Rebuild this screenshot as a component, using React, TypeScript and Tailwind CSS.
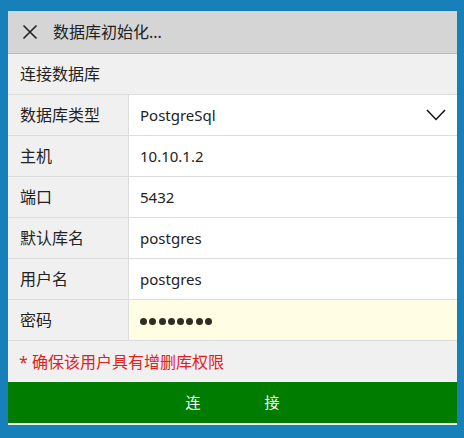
import React from "react";

const font = { fontFamily: '"Noto Sans", "Noto Sans CJK SC", sans-serif' };

function Row({ label, children, bg = "bg-white" }: { label: string; children: React.ReactNode; bg?: string }) {
  return (
    <div className="flex h-[41px] border-b border-[#dcdcdc]">
      <div className="w-[121px] shrink-0 flex items-center pl-3 bg-[#f0f0f0] border-r border-[#dcdcdc] text-[16px] text-[#222]">{label}</div>
      <div className={`flex-1 flex items-center pl-[11px] pr-[11px] text-[15px] text-[#222] ${bg}`}>{children}</div>
    </div>
  );
}

export default function App() {
  return (
    <div className="w-[464px] h-[438px] bg-[#1780b8] pt-[11px] pl-[8px]" style={font}>
      <div className="w-[449px] bg-[#f0f0f0] flex flex-col pb-[2px]">
        <div className="h-[43px] bg-[#d5d5d5] border-b border-[#bdbdbd] flex items-center pl-[14px]">
          <svg width="16" height="16" viewBox="0 0 16 16" className="mr-[15px]">
            <path d="M1.5 1.5 L14.5 14.5 M14.5 1.5 L1.5 14.5" stroke="#222" strokeWidth="1.6" fill="none" />
          </svg>
          <span className="text-[16px] text-[#222]">数据库初始化...</span>
        </div>
        <div className="h-[41px] flex items-center pl-3 text-[16px] text-[#222] border-b border-[#dcdcdc]">连接数据库</div>
        <Row label="数据库类型">
          <span className="flex-1">PostgreSql</span>
          <svg width="20" height="12" viewBox="0 0 20 12">
            <path d="M1 1 L10 10.5 L19 1" stroke="#111" strokeWidth="1.5" fill="none" />
          </svg>
        </Row>
        <Row label="主机">10.10.1.2</Row>
        <Row label="端口">5432</Row>
        <Row label="默认库名">postgres</Row>
        <Row label="用户名">postgres</Row>
        <Row label="密码" bg="bg-[#fffde3]">
          <div className="flex gap-[2.3px] mt-[2px]">
            {Array.from({ length: 8 }).map((_, i) => (
              <div key={i} className="w-[7px] h-[7px] rounded-full bg-[#2f2e22]" />
            ))}
          </div>
        </Row>
        <div className="h-[41px] flex items-center pl-[11px] text-[16px] text-[#e0211d]">* 确保该用户具有增删库权限</div>
        <div className="h-[41px] bg-[#007d00] flex items-center justify-center text-white text-[15px]">
          <span>连</span>
          <span className="ml-[64px]">接</span>
        </div>
      </div>
    </div>
  );
}
